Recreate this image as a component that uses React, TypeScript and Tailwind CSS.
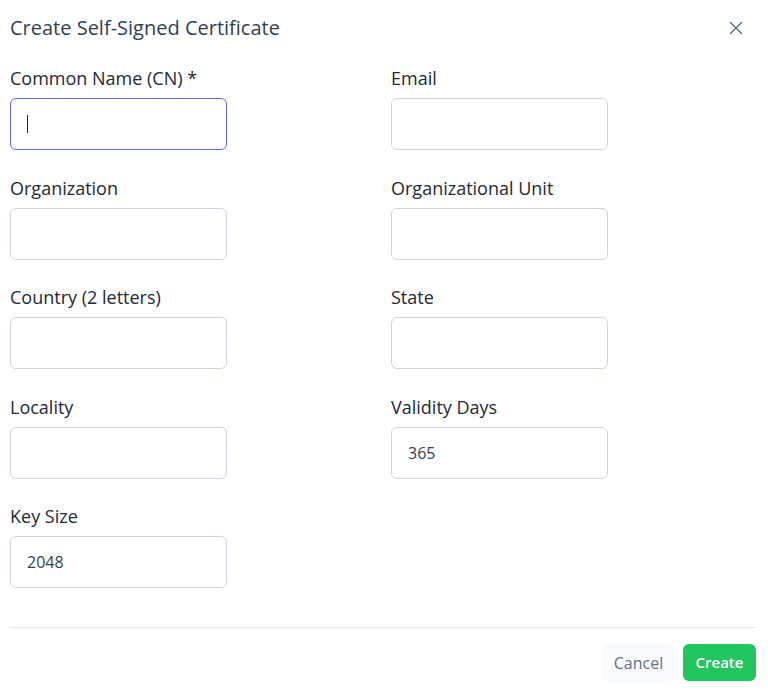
import React from "react";

const fields: { label: string; value?: string; focused?: boolean }[] = [
  { label: "Common Name (CN) *", focused: true },
  { label: "Email" },
  { label: "Organization" },
  { label: "Organizational Unit" },
  { label: "Country (2 letters)" },
  { label: "State" },
  { label: "Locality" },
  { label: "Validity Days", value: "365" },
  { label: "Key Size", value: "2048" },
];

export default function App() {
  return (
    <div
      className="w-[768px] h-[698px] bg-white pl-[10px] pr-[12px] pt-[14px]"
      style={{ fontFamily: "'Open Sans', 'Noto Sans', sans-serif" }}
    >
      <div className="flex items-center justify-between">
        <h2 className="text-[20px] leading-7 text-[#334155]">Create Self-Signed Certificate</h2>
        <button className="mr-[13px] text-[#64748b]">
          <svg width="14" height="14" viewBox="0 0 14 14" fill="none" stroke="currentColor" strokeWidth="1.5" strokeLinecap="round">
            <path d="M1.5 1.5 L12.5 12.5 M12.5 1.5 L1.5 12.5" />
          </svg>
        </button>
      </div>
      <div className="mt-[24px] grid grid-cols-2 gap-x-4 gap-y-[25.5px]">
        {fields.map((f) => (
          <div key={f.label} className="flex flex-col">
            <label className="text-[18px] leading-6 text-[#1f2937]">{f.label}</label>
            <div
              className={`mt-2 w-[217px] h-[52px] rounded-[6px] border flex items-center px-4 text-[16px] text-[#374151] ${
                f.focused ? "border-[#6366f1]" : "border-[#cbd5e1]"
              }`}
            >
              {f.focused ? <span className="w-px h-[18px] bg-[#1f2937]" /> : f.value}
            </div>
          </div>
        ))}
      </div>
      <div className="mt-[39px] border-t border-[#e2e8f0]" />
      <div className="mt-4 flex justify-end gap-2">
        <button className="w-[73px] h-[37px] rounded-md bg-[#f8fafc] text-[16px] text-[#64748b]">Cancel</button>
        <button className="w-[73px] h-[37px] rounded-md bg-[#22c55e] text-[15px] font-semibold text-white">Create</button>
      </div>
    </div>
  );
}
